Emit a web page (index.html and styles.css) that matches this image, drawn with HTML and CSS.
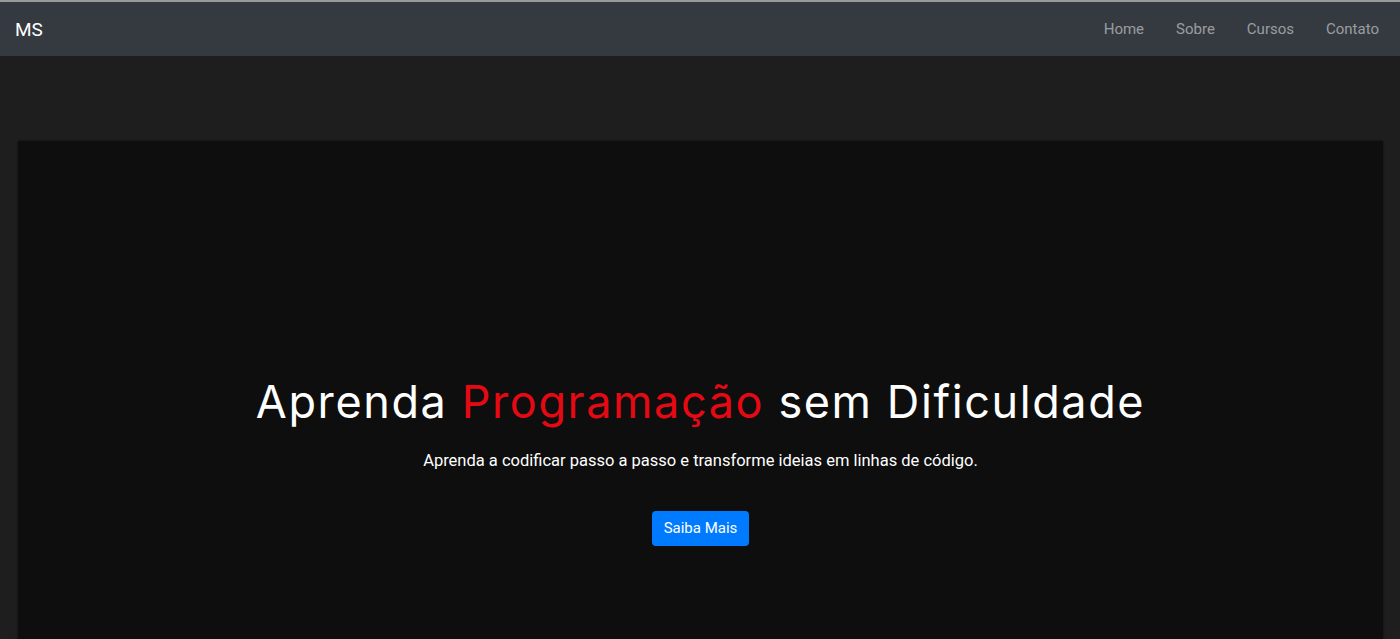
FILE: index.html
```html
<!DOCTYPE html>
<html lang="pt-BR">
<head>
    <meta charset="UTF-8">
    <meta name="viewport" content="width=device-width, initial-scale=1.0">
    <title>MS - Aprenda Programação</title>
    <link rel="stylesheet" href="styles.css">
</head>
<body>
    <nav class="navbar">
        <a href="#" class="brand">MS</a>
        <ul class="nav-links">
            <li><a href="#">Home</a></li>
            <li><a href="#">Sobre</a></li>
            <li><a href="#">Cursos</a></li>
            <li><a href="#">Contato</a></li>
        </ul>
    </nav>
    <main class="page">
        <section class="hero">
            <h1 class="hero-title">Aprenda <span class="highlight">Programação</span> sem Dificuldade</h1>
            <p class="hero-text">Aprenda a codificar passo a passo e transforme ideias em linhas de código.</p>
            <a href="#" class="btn">Saiba Mais</a>
        </section>
    </main>
</body>
</html>
```

FILE: styles.css
```css
body {
    margin: 0;
    font-family: Roboto, Arial, sans-serif;
    background: #1e1e1e;
    color: #fff;
    border-top: 2px solid #9a9a9a;
}
.navbar {
    display: flex;
    justify-content: space-between;
    align-items: center;
    height: 54px;
    padding: 0 15px;
    background: #343a40;
}
.brand {
    color: #fff;
    font-size: 19px;
    text-decoration: none;
}
.nav-links {
    display: flex;
    list-style: none;
    margin: 0;
    padding: 0;
}
.nav-links a {
    display: block;
    padding: 8px 16px;
    font-size: 15px;
    color: rgba(255, 255, 255, 0.5);
    text-decoration: none;
}
.nav-links li:last-child a {
    padding-right: 6px;
}
.page {
    padding: 85px 17px 0 18px;
}
.hero {
    background: #0e0e0e;
    box-shadow: 0 0 2px rgba(0, 0, 0, 0.6);
    text-align: center;
    padding: 234px 20px 200px;
}
.hero-title {
    margin: 0 0 22px;
    font-family: Inter, "DejaVu Sans", sans-serif;
    font-weight: 400;
    font-size: 45px;
    line-height: 54px;
    letter-spacing: 1.6px;
}
.highlight {
    color: #e50914;
}
.hero-text {
    margin: 0 0 41px;
    font-size: 16.5px;
}
.btn {
    display: inline-block;
    padding: 8px 12px;
    font-size: 15px;
    line-height: 19px;
    color: #fff;
    background: #007bff;
    border-radius: 4px;
    text-decoration: none;
}
```
